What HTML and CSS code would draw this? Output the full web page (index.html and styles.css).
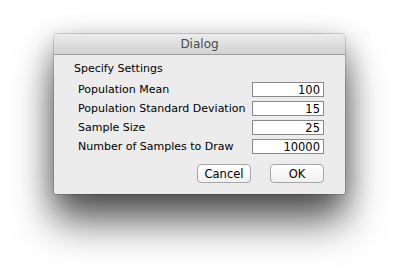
FILE: index.html
```html
<!DOCTYPE html>
<html lang="en">
<head>
    <meta charset="UTF-8">
    <title>Dialog</title>
    <link rel="stylesheet" href="styles.css">
</head>
<body>
    <div class="window">
        <div class="titlebar">Dialog</div>
        <div class="content">
            <div class="heading">Specify Settings</div>
            <div class="row">
                <label for="mean">Population Mean</label>
                <input type="text" id="mean" value="100">
            </div>
            <div class="row">
                <label for="sd">Population Standard Deviation</label>
                <input type="text" id="sd" value="15">
            </div>
            <div class="row">
                <label for="size">Sample Size</label>
                <input type="text" id="size" value="25">
            </div>
            <div class="row">
                <label for="draws">Number of Samples to Draw</label>
                <input type="text" id="draws" value="10000">
            </div>
            <div class="buttons">
                <button type="button">Cancel</button>
                <button type="button" class="ok">OK</button>
            </div>
        </div>
    </div>
</body>
</html>
```

FILE: styles.css
```css
html, body {
    height: 100%;
}
body {
    margin: 0;
    padding-top: 34px;
    box-sizing: border-box;
    background-color: #fff;
    font-family: "DejaVu Sans", "Liberation Sans", sans-serif;
    font-size: 11px;
    color: #000;
}
.window {
    width: 291px;
    height: 160px;
    margin-left: 54px;
    background-color: #ececec;
    border-radius: 4px 4px 2px 2px;
    box-shadow: 0 0 0 1px rgba(0, 0, 0, 0.15), 0 8px 28px rgba(0, 0, 0, 0.3), 0 28px 40px rgba(0, 0, 0, 0.6);
    overflow: hidden;
}
.titlebar {
    height: 20px;
    line-height: 20px;
    text-align: center;
    font-size: 12px;
    color: #4a4a4a;
    background: linear-gradient(#ececec, #d2d2d2);
    border-bottom: 1px solid #9d9d9d;
}
.content {
    padding: 6px 21px 0 20px;
}
.heading {
    height: 16px;
    line-height: 16px;
    margin-bottom: 3px;
}
.row {
    display: flex;
    justify-content: space-between;
    align-items: center;
    height: 19px;
    padding-left: 4px;
}
.row label {
    white-space: nowrap;
    line-height: 15px;
}
.row input {
    width: 72px;
    height: 15px;
    box-sizing: border-box;
    margin: 0;
    padding: 0 3px;
    border: 1px solid #8a8a8a;
    background-color: #fff;
    font: inherit;
    font-size: 11.5px;
    text-align: right;
    color: #000;
}
.buttons {
    display: flex;
    justify-content: flex-end;
    gap: 19px;
    margin-top: 8px;
}
button {
    height: 19px;
    width: 54px;
    padding: 0;
    border: 1px solid #a6a6a6;
    border-radius: 4px;
    background: linear-gradient(#ffffff, #f0f0f0);
    font: inherit;
    font-size: 11.5px;
    color: #000;
}
```
